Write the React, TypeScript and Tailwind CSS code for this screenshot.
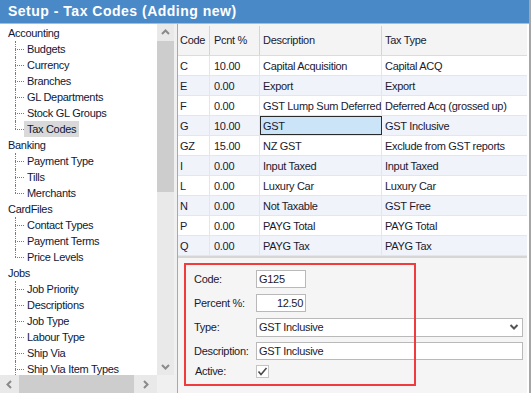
import React from "react";

type TreeGroup = { name: string; items: string[]; more?: boolean };

const tree: TreeGroup[] = [
  {
    name: "Accounting",
    items: ["Budgets", "Currency", "Branches", "GL Departments", "Stock GL Groups", "Tax Codes"],
  },
  { name: "Banking", items: ["Payment Type", "Tills", "Merchants"] },
  { name: "CardFiles", items: ["Contact Types", "Payment Terms", "Price Levels"] },
  {
    name: "Jobs",
    items: ["Job Priority", "Descriptions", "Job Type", "Labour Type", "Ship Via", "Ship Via Item Types"],
    more: true,
  },
];

const rows = [
  ["C", "10.00", "Capital Acquisition", "Capital ACQ"],
  ["E", "0.00", "Export", "Export"],
  ["F", "0.00", "GST Lump Sum Deferred", "Deferred Acq (grossed up)"],
  ["G", "10.00", "GST", "GST Inclusive"],
  ["GZ", "15.00", "NZ GST", "Exclude from GST reports"],
  ["I", "0.00", "Input Taxed", "Input Taxed"],
  ["L", "0.00", "Luxury Car", "Luxury Car"],
  ["N", "0.00", "Not Taxable", "GST Free"],
  ["P", "0.00", "PAYG Total", "PAYG Total"],
  ["Q", "0.00", "PAYG Tax", "PAYG Tax"],
];

const Arrow = ({ dir }: { dir: "up" | "down" | "left" | "right" }) => {
  const pts = {
    up: "2,7 5.5,3.5 9,7",
    down: "2,4 5.5,7.5 9,4",
    left: "7,2 3.5,5.5 7,9",
    right: "4,2 7.5,5.5 4,9",
  }[dir];
  return (
    <svg width="11" height="11" viewBox="0 0 11 11">
      <polyline points={pts} fill="none" stroke="#8a8a8a" strokeWidth="2" />
    </svg>
  );
};

const TreePanel = () => (
  <div className="flex h-full w-[174px] flex-col">
    <div className="flex min-h-0 flex-1">
      <div className="w-[157px] overflow-hidden bg-white pt-px text-[11px] tracking-[-0.3px] text-[#0d1838]">
        {tree.map((g) => (
          <div key={g.name}>
            <div className="flex h-4 items-center pl-2 whitespace-nowrap">{g.name}</div>
            {g.items.map((item, i) => {
              const last = i === g.items.length - 1 && !g.more;
              return (
                <div key={item} className="flex h-4 items-center whitespace-nowrap">
                  <span className="relative ml-[15px] h-full w-[9px] shrink-0">
                    <span
                      className={`absolute left-0 top-0 border-l border-dotted border-[#7a7a7a] ${
                        last ? "h-1/2" : "h-full"
                      }`}
                    />
                    <span className="absolute left-0 top-1/2 w-[9px] border-t border-dotted border-[#7a7a7a]" />
                  </span>
                  <span
                    className={`px-[3px] leading-4 ${item === "Tax Codes" ? "bg-[#d9d9d9]" : ""}`}
                  >
                    {item}
                  </span>
                </div>
              );
            })}
            {g.more && (
              <div className="flex h-4">
                <span className="ml-[15px] h-full border-l border-dotted border-[#7a7a7a]" />
              </div>
            )}
          </div>
        ))}
      </div>
      <div className="flex w-[17px] flex-col items-center bg-[#e9e9e9]">
        <div className="flex h-[17px] items-center justify-center">
          <Arrow dir="up" />
        </div>
        <div className="h-[151px] w-full bg-[#cdcdcd]" />
        <div className="flex-1" />
        <div className="flex h-[17px] items-center justify-center">
          <Arrow dir="down" />
        </div>
      </div>
    </div>
    <div className="flex h-[18px]">
      <div className="flex w-[157px] items-center bg-[#e9e9e9]">
        <div className="flex w-[19px] justify-center">
          <Arrow dir="left" />
        </div>
        <div className="h-full w-[115px] bg-[#cdcdcd]" />
        <div className="flex flex-1 justify-center">
          <Arrow dir="right" />
        </div>
      </div>
      <div className="w-[17px] bg-[#f0f0f0]" />
    </div>
  </div>
);

const Grid = () => (
  <div className="w-full border-b-2 border-[#d6d6d6] text-[11px] tracking-[-0.3px] text-[#1a1a30]">
    <div className="flex h-8 bg-[#f4f4f4] border-b border-[#dcdcdc] pt-[2px]">
      <div className="flex w-[32px] items-center border-r border-[#d4d4d4] pl-[2px]">Code</div>
      <div className="flex w-[50px] items-center border-r border-[#d4d4d4] pl-[4px]">Pcnt %</div>
      <div className="flex w-[122px] items-center border-r border-[#d4d4d4] pl-[3px]">Description</div>
      <div className="flex flex-1 items-center pl-[3px]">Tax Type</div>
    </div>
    {rows.map((r, i) => (
      <div
        key={r[0]}
        className={`flex h-5 border-b border-[#e4e6ea] ${i % 2 === 1 ? "bg-[#f0f3f9]" : "bg-white"}`}
      >
        <div className="flex w-[32px] items-center border-r border-[#e4e6ea] pl-[2px] pt-px">{r[0]}</div>
        <div className="flex w-[50px] items-center border-r border-[#e4e6ea] pl-[4px] pt-px">{r[1]}</div>
        <div
          className={`flex w-[122px] items-center whitespace-nowrap overflow-hidden pt-px ${
            r[0] === "G" ? "border border-[#2a2a2a] bg-[#cce4f7] pl-[2px]" : "border-r border-[#e4e6ea] pl-[3px]"
          }`}
        >
          {r[2]}
        </div>
        <div className="flex flex-1 items-center whitespace-nowrap pl-[3px] pt-px">{r[3]}</div>
      </div>
    ))}
  </div>
);

const Field = ({ label, children }: { label: string; children: React.ReactNode }) => (
  <div className="flex h-6 items-center">
    <div className="w-[62px] shrink-0">{label}</div>
    {children}
  </div>
);

const Form = () => (
  <div className="relative flex-1 bg-[#f5f5f5] pl-[16px] pt-[9px] text-[11px] tracking-[-0.3px] text-[#1a1a30]">
    <Field label="Code:">
      <div className="flex h-[18px] w-[50px] items-center border border-[#b9b9b9] bg-white pl-[2px]">G125</div>
    </Field>
    <Field label="Percent %:">
      <div className="flex h-[18px] w-[50px] items-center justify-end border border-[#b9b9b9] bg-white pr-[2px]">
        12.50
      </div>
    </Field>
    <Field label="Type:">
      <div className="mr-[4px] flex h-[19px] flex-1 items-center justify-between border border-[#b9b9b9] bg-white pl-[2px] pr-[3px]">
        <span>GST Inclusive</span>
        <svg width="10" height="8" viewBox="0 0 10 8">
          <polyline points="1.5,2 5,5.5 8.5,2" fill="none" stroke="#555" strokeWidth="2" />
        </svg>
      </div>
    </Field>
    <Field label="Description:">
      <div className="mr-[4px] flex h-[18px] flex-1 items-center border border-[#b9b9b9] bg-white pl-[2px]">
        GST Inclusive
      </div>
    </Field>
    <div className="flex h-4 items-center">
      <div className="w-[62px] shrink-0 pl-px">Active:</div>
      <div className="flex h-[13px] w-[13px] items-center justify-center border border-[#c4c4c4] bg-white">
        <svg width="11" height="11" viewBox="0 0 11 11">
          <polyline points="1.5,5.5 4,8.5 9.5,2" fill="none" stroke="#4a4a4a" strokeWidth="1.6" />
        </svg>
      </div>
    </div>
    <div className="pointer-events-none absolute left-[6px] top-[5px] h-[123px] w-[232px] border-2 border-[#f03c3c]" />
  </div>
);

export default function App() {
  return (
    <div
      className="flex h-[393px] w-[531px] flex-col overflow-hidden border-r-2 border-[#a6a6a6] bg-white"
      style={{ fontFamily: '"Liberation Sans", Arial, sans-serif' }}
    >
      <div className="flex h-[23px] shrink-0 items-center bg-[#4a89c8] pl-2 text-[14px] font-bold tracking-[0.5px] text-white">
        Setup - Tax Codes (Adding new)
      </div>
      <div className="h-px shrink-0 bg-[#b8b8b8]" />
      <div className="flex min-h-0 flex-1">
        <TreePanel />
        <div className="w-[3px] bg-[#f0f0f0]" />
        <div className="flex min-w-0 flex-1 flex-col border-l border-[#a9a9a9] pr-[2px]">
          <Grid />
          <Form />
        </div>
      </div>
    </div>
  );
}
